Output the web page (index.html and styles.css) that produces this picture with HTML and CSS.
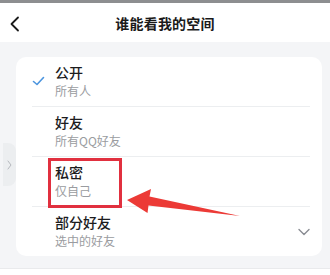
FILE: index.html
```html
<!DOCTYPE html>
<html lang="zh-CN">
<head>
<meta charset="utf-8">
<title>谁能看我的空间</title>
<link rel="stylesheet" href="styles.css">
</head>
<body>
<div class="screen">
  <div class="topline"></div>
  <header class="header">
    <svg class="back" width="12" height="16" viewBox="0 0 12 16"><path d="M9 1.5 L2.5 8 L9 14.5" fill="none" stroke="#1a1a1a" stroke-width="1.8" stroke-linecap="round" stroke-linejoin="round"/></svg>
    <h1 class="title">谁能看我的空间</h1>
  </header>
  <main class="content">
    <div class="card">
      <div class="row">
        <div class="mark">
          <svg width="13" height="10" viewBox="0 0 13 10"><path d="M1.5 5.5 L5 8.5 L11.5 1.5" fill="none" stroke="#4c95df" stroke-width="1.6" stroke-linecap="round" stroke-linejoin="round"/></svg>
        </div>
        <div class="text">
          <div class="name">公开</div>
          <div class="desc">所有人</div>
        </div>
      </div>
      <div class="row">
        <div class="mark"></div>
        <div class="text">
          <div class="name">好友</div>
          <div class="desc">所有QQ好友</div>
        </div>
      </div>
      <div class="row">
        <div class="mark"></div>
        <div class="text">
          <div class="name">私密</div>
          <div class="desc">仅自己</div>
        </div>
        <div class="highlight"></div>
      </div>
      <div class="row last">
        <div class="mark"></div>
        <div class="text">
          <div class="name">部分好友</div>
          <div class="desc">选中的好友</div>
        </div>
        <svg class="expand" width="12" height="8" viewBox="0 0 12 8"><path d="M1 1.5 L6 6.5 L11 1.5" fill="none" stroke="#8a8d93" stroke-width="1.4" stroke-linecap="round" stroke-linejoin="round"/></svg>
      </div>
    </div>
  </main>
  <div class="footer"></div>
  <div class="sidetab">
    <svg width="5" height="10" viewBox="0 0 5 10"><path d="M1 1 L4 5 L1 9" fill="none" stroke="#b5b8bd" stroke-width="1" stroke-linecap="round"/></svg>
  </div>
  <svg class="arrow" width="330" height="275" viewBox="0 0 330 275">
    <polygon points="127,200 151,189 149.5,196.5 240,216 148.5,205.5 147.5,213" fill="#ec3a36"/>
  </svg>
</div>
</body>
</html>
```

FILE: styles.css
```css
* { box-sizing: border-box; }
html, body {
  margin: 0;
  padding: 0;
  background: #ffffff;
}
body {
  font-family: "Noto Sans CJK SC", "Noto Sans", "Liberation Sans", sans-serif;
  color: #1d1d1f;
}
.screen {
  position: relative;
  width: 330px;
  height: 275px;
  overflow: hidden;
}
.topline {
  height: 3px;
  background: #8d8e90;
}
.header {
  position: relative;
  height: 39px;
  display: flex;
  align-items: center;
  justify-content: center;
  background: #ffffff;
}
.back {
  position: absolute;
  left: 9px;
  top: 13px;
}
.title {
  margin: 0;
  font-size: 14px;
  font-weight: 700;
  line-height: 18px;
  color: #1a1a1a;
  letter-spacing: 0.2px;
}
.content {
  background: #f4f5f7;
  padding: 15px 8px 12px 16px;
}
.card {
  background: #ffffff;
  border-radius: 10px;
  padding: 0 12px 0 16px;
}
.row {
  position: relative;
  display: flex;
  align-items: center;
  height: 50px;
  border-bottom: 1px solid #eceef0;
}
.row.last {
  border-bottom: none;
  height: 49px;
}
.mark {
  width: 23px;
  flex: none;
  display: flex;
  align-items: center;
  padding-left: 0;
  margin-top: -1px;
}
.text {
  flex: 1;
  display: flex;
  flex-direction: column;
  margin-top: -2px;
}
.name {
  font-size: 14px;
  line-height: 18px;
  font-weight: 500;
  color: #1c1c1e;
}
.desc {
  margin-top: 2px;
  font-size: 12px;
  line-height: 16px;
  color: #9a9ca0;
}
.expand {
  flex: none;
  margin-right: 0;
  margin-top: 1px;
}
.highlight {
  position: absolute;
  left: 16px;
  top: 1px;
  width: 74px;
  height: 50px;
  border: 3px solid #e1303f;
}
.footer {
  height: 7px;
  border-top: 1px solid #e9eaec;
  background: #ffffff;
}
.sidetab {
  position: absolute;
  left: 3px;
  top: 143px;
  width: 13px;
  height: 43px;
  background: #eceef0;
  border-radius: 0 8px 8px 0;
  display: flex;
  align-items: center;
  justify-content: center;
}
.arrow {
  position: absolute;
  left: 0;
  top: 0;
  pointer-events: none;
}
```
